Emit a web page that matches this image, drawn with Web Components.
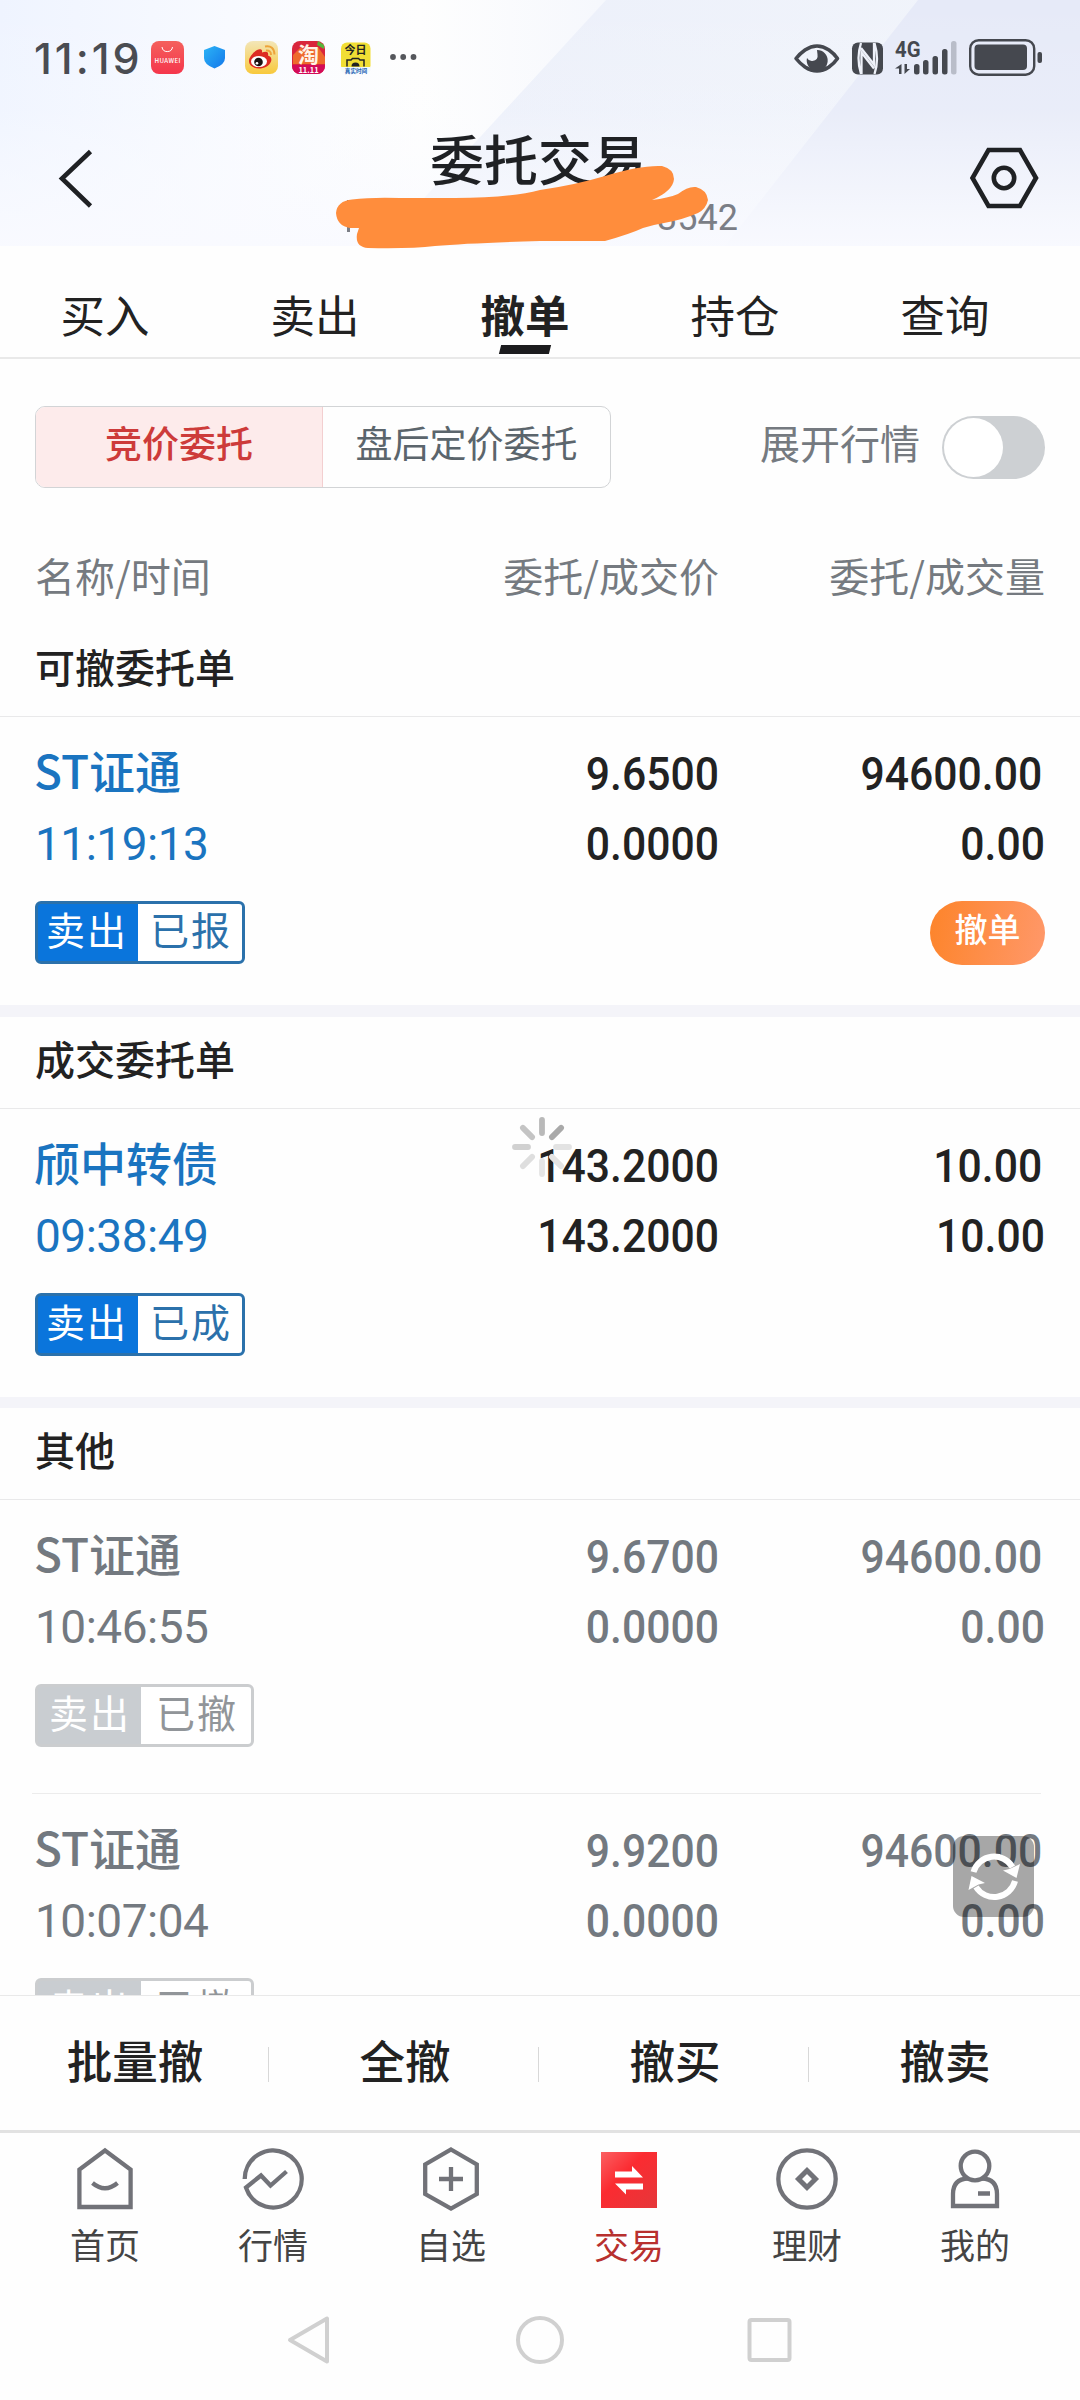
<!DOCTYPE html>
<html lang="zh-CN">
<head>
<meta charset="utf-8">
<title>委托交易</title>
<style>
  body {
    margin: 0;
    width: 1080px;
    height: 2400px;
    overflow: hidden;
    background: #fefefe;
    color: #222;
    font-family: "Noto Sans CJK SC", "Noto Sans", sans-serif;
  }
</style>
</head>
<body>
<trade-app></trade-app>

<script>
class StatusBar extends HTMLElement {
  constructor() {
    super();
    this.attachShadow({ mode: "open" });
    this.shadowRoot.innerHTML = `
      <style>
      :host {
        display: flex;
        height: 116px;
        align-items: center;
        justify-content: space-between;
        padding: 0 38px 0 34px;
        box-sizing: border-box;
      }
      .time {
        font: 500 43px/60px Inter, Roboto, sans-serif;
        letter-spacing: 3px;
        color: #4a4c52;
        width: 117px;
        white-space: nowrap;
      }
      .left, .right {
        display: flex;
        align-items: center;
      }
      svg {
        display: block;
        overflow: visible;
      }
      </style>
      <div class="left">
        <div class="time">11:19</div>
        <svg width="270" height="34" viewBox="151 42 270 34" font-family="Noto Sans CJK SC, sans-serif">
          <defs>
            <linearGradient id="hw" x2="0" y2="1"><stop stop-color="#f4605c"/><stop offset="1" stop-color="#f5364c"/></linearGradient>
            <linearGradient id="sh" x2="1" y2="1"><stop stop-color="#2bb4f6"/><stop offset="1" stop-color="#1477ea"/></linearGradient>
            <linearGradient id="wb" x2="0" y2="1"><stop stop-color="#f3e6b8"/><stop offset="1" stop-color="#f8c93c"/></linearGradient>
          </defs>
          <rect x="151" y="42" width="33" height="33" rx="8" fill="url(#hw)"/>
          <path d="M162 48a5.300 5.300 0 0 0 10.500 0" fill="none" stroke="#fff" stroke-width="1"/>
          <text x="167.500" y="63.500" font-size="6.200" font-weight="500" fill="#fff" text-anchor="middle" textLength="26">HUAWEI</text>
          <path d="M214.500 47l10.500 4v8q0 6.500-10.500 10.500q-10.500-4-10.500-10.500v-8z" fill="url(#sh)"/>
          <rect x="245" y="42" width="33" height="33" rx="8" fill="url(#wb)"/>
          <path d="M249 62c0-5 8-13 12-11.500c1.500.5 1 2.500 1 3c4-1.500 7-1 6 3c3 1 4 3 3 6c-1.500 4.500-7 7-12 7c-6 0-10-3.500-10-7.500z" fill="#dd2a22"/>
          <ellipse cx="259" cy="62.500" rx="8" ry="5.600" fill="#fff"/>
          <circle cx="258.500" cy="63" r="4.300" fill="#1a1212"/>
          <circle cx="257" cy="64.200" r="1.300" fill="#fff"/>
          <path d="M265 47.500q9-1.500 9.500 8M266 51.500q5-.5 5 4.500" fill="none" stroke="#eda33a" stroke-width="2"/>
          <rect x="292" y="42" width="33" height="33" rx="8" fill="#d9263c"/>
          <path d="M292 66h33v1a8 8 0 0 1-8 8h-17a8 8 0 0 1-8-8z" fill="#d40b58"/>
          <path d="M293 56l8-8l5 4l12-4l7 10v7h-32z" fill="#ee6a2c"/>
          <path d="M318 42l6 4v4l-7-4z" fill="#58b53a"/>
          <text x="308.500" y="62.500" font-size="21" font-weight="700" fill="#fff3e6" text-anchor="middle">淘</text>
          <text x="308.500" y="73.500" font-size="7.500" font-weight="700" fill="#fff" text-anchor="middle">11.11</text>
          <rect x="341" y="43.500" width="29.500" height="29" rx="6" fill="#f1de35"/>
          <path d="M341 68h29.500v3q-1 3-4 3h-21q-4 0-4.500-3z" fill="#f4fafc"/>
          <text x="355.500" y="55" font-size="11" font-weight="700" fill="#222" text-anchor="middle">今日</text>
          <path d="M347 67.500v-6.500h4l1.500-1.500h6l1.500 1.500h4v6.500" fill="none" stroke="#222" stroke-width="1.500"/>
          <path d="M351.500 67.500a4 4 0 0 1 8 0z" fill="#222"/>
          <text x="356" y="73.500" font-size="5.600" font-weight="700" fill="#2262b4" text-anchor="middle">真实时间</text>
          <g fill="#55575c"><circle cx="393" cy="58" r="2.900"/><circle cx="403.200" cy="58" r="2.900"/><circle cx="413.500" cy="58" r="2.900"/></g>
        </svg>
      </div>
      <div class="right">
        <svg width="250" height="40" viewBox="792 38 250 40" fill="#45484f">
          <path d="M796 58.500q4-5 9-8.500q12-8 24 0q5 3.500 8.500 8.500q-3.500 5-8.500 8.500q-12 8-24 0q-5-3.500-9-8.500z" fill="none" stroke="#45484f" stroke-width="3.600" stroke-linejoin="round"/>
          <path d="M817 50a10.500 10.500 0 1 1-10 8q2 3.500 5.500 3q6-1 5-6.500q-.3-3-.5-4.500z"/>
          <rect x="852" y="42.500" width="31" height="32" rx="6"/>
          <path d="M861 43q-5 15 0 31M874.500 74q5-15 0-31M861.500 74V52.500l12.500 16M874 43v21.500l-13-16.500" fill="none" stroke="#eef1f9" stroke-width="2.300"/>
          <text x="895" y="57" font-family="Roboto" font-size="22" font-weight="700" textLength="25.500" lengthAdjust="spacingAndGlyphs">4G</text>
          <path d="M901.500 64v10h-2.500v-5.500h-4zM904.500 64v10l5.500-5h-3v-5z"/>
          <rect x="914" y="64" width="5.500" height="10.500" rx="2.500"/>
          <rect x="923" y="60" width="5.500" height="14.500" rx="2.500"/>
          <rect x="932.500" y="56" width="5.500" height="18.500" rx="2.500"/>
          <rect x="942" y="49" width="5.500" height="25.500" rx="2.500"/>
          <rect x="951" y="41" width="5.500" height="33.500" rx="2.500" fill="#b9bdc9"/>
          <rect x="970.200" y="40.200" width="64" height="34.500" rx="8.500" fill="none" stroke="#45484f" stroke-width="2.400"/>
          <rect x="974.500" y="44.500" width="52.500" height="25.500" rx="4"/>
          <rect x="1037.500" y="52" width="4.500" height="11" rx="2"/>
        </svg>
      </div>
    `;
  }
}
customElements.define("status-bar", StatusBar);

class PageHeader extends HTMLElement {
  constructor() {
    super();
    this.attachShadow({ mode: "open" });
    this.shadowRoot.innerHTML = `
      <style>
      :host {
        display: block;
        height: 246px;
        position: relative;
        background: linear-gradient(90deg, #eff4ff 0, #f8faff 230px, #fefefe 420px, #f6f8fd 600px, #eef1fa 1080px);
      }
      .facets, .mark {
        position: absolute;
        left: 0;
        top: 0;
      }
      .top {
        position: relative;
      }
      .bar {
        display: flex;
        height: 130px;
        box-sizing: border-box;
        justify-content: space-between;
        padding: 0 38px 0 54px;
      }
      .bar svg {
        margin-top: 28px;
      }
      .title {
        display: flex;
        flex-direction: column;
        align-items: center;
        padding-left: 21px;
        padding-right: 9px;
        width: 400px;
      }
      h1 {
        margin: 0;
        font-size: 54px;
        font-weight: 500;
        line-height: 60px;
        height: 79px;
        margin-top: 12px;
        margin-bottom: -9px;
        color: #1f2124;
      }
      .account {
        font: 36px/40px Roboto, sans-serif;
        color: #7b7e86;
        align-self: flex-end;
        margin-right: 0;
      }
      </style>
      <svg class="facets" width="1080" height="246">
        <defs>
          <linearGradient id="fade" x2="0" y2="1"><stop stop-color="#fff" stop-opacity="0"/><stop offset=".45" stop-color="#fbfcff" stop-opacity=".15"/><stop offset="1" stop-color="#f9faff" stop-opacity=".95"/></linearGradient>
          <linearGradient id="glow" x2="1" y2="0"><stop stop-color="#ebeffa"/><stop offset="1" stop-color="#f2f5fb"/></linearGradient>
        </defs>
        <path d="M606 0H1080V246H380z" fill="url(#glow)"/>
        <path d="M918 0H1080V246H725z" fill="#e6eaf8"/>
        <rect width="1080" height="246" fill="url(#fade)"/>
      </svg>
      <div class="top">
        <slot></slot>
        <div class="bar">
          <svg width="44" height="68" viewBox="54 144 44 68"><path d="M90.500 151.500L62 178.500L90.500 206" fill="none" stroke="#1f2124" stroke-width="4.600"/></svg>
          <div class="title">
            <h1>委托交易</h1>
            <div class="account">3542</div>
          </div>
          <svg width="76" height="68" viewBox="966 144 76 68" fill="none" stroke="#1f2124" stroke-width="4.600">
            <path d="M988.500 150H1020L1036 178L1020 206H988.500L972.500 178z"/>
            <circle cx="1004" cy="178" r="10.200"/>
          </svg>
        </div>
      </div>
      <svg class="mark" width="1080" height="256">
        <path d="M348.500 200V232" stroke="#7b7e86" stroke-width="3"/>
        <path d="M336 213Q337 201 352 199.500Q372 197 400 198H455Q510 198 540 190Q575 185 605 176Q640 165 662 166Q674 169 674 179Q673 191 652 200Q668 198 678 194Q688 186 696 187Q707 190 708 200Q706 209 698 213Q682 220 664 223Q652 225 643 228Q630 234 605 241H540Q470 243 435 246Q410 249 368 248Q355 247 357 234L359 228H350Q337 226 336 213z" fill="#ff8d3c"/>
      </svg>
    `;
  }
}
customElements.define("page-header", PageHeader);

class TradeTabs extends HTMLElement {
  constructor() {
    super();
    this.attachShadow({ mode: "open" });
    this.shadowRoot.innerHTML = `
      <style>
      :host {
        display: flex;
        height: 113px;
        box-sizing: border-box;
        padding-top: 33px;
        border-bottom: 2px solid #e9e9e9;
      }
      ::slotted(*) {
        width: 210px;
        text-align: center;
        font-size: 44.500px;
        line-height: 70px;
      }
      ::slotted(.active) {
        font-weight: 700;
      }
      ::slotted(.active)::after {
        content: "";
        display: block;
        width: 50px;
        height: 9px;
        margin: -4px auto 0;
        background: #1c1c1e;
        transform: skewX(-14deg);
      }
      </style>
      <slot></slot>
    `;
  }
}
customElements.define("trade-tabs", TradeTabs);

class FilterBar extends HTMLElement {
  constructor() {
    super();
    this.attachShadow({ mode: "open" });
    this.shadowRoot.innerHTML = `
      <style>
      :host {
        display: flex;
        align-items: center;
        height: 82px;
        padding: 47px 35px 0;
      }
      .segment {
        display: flex;
        box-sizing: border-box;
        width: 576px;
        height: 82px;
        border: 1px solid #d2d4d6;
        border-radius: 10px;
        overflow: hidden;
        font-size: 37px;
        line-height: 71px;
        text-align: center;
      }
      .on {
        width: 286px;
        background: #fdebeb;
        border-right: 1px solid #f3cfd0;
        color: #cd3b3a;
        font-weight: 500;
      }
      .off {
        flex: 1;
        color: #5b656c;
      }
      .label {
        margin-left: auto;
        font-size: 40px;
        line-height: 60px;
        padding-bottom: 10px;
        color: #757a80;
      }
      .switch {
        width: 103px;
        height: 63px;
        border-radius: 32px;
        background: #cdd0d3;
        margin-left: 22px;
        box-sizing: border-box;
        padding: 2px;
      }
      .knob {
        width: 59px;
        height: 59px;
        border-radius: 50%;
        background: #fff;
      }
      </style>
      <div class="segment">
        <div class="on">竞价委托</div>
        <div class="off">盘后定价委托</div>
      </div>
      <div class="label">展开行情</div>
      <div class="switch"><div class="knob"></div></div>
    `;
  }
}
customElements.define("filter-bar", FilterBar);

class OrderSection extends HTMLElement {
  constructor() {
    super();
    this.attachShadow({ mode: "open" });
    this.shadowRoot.innerHTML = `
      <style>
      :host {
        display: block;
      }
      :host(:not(:first-of-type)) {
        border-top: 12px solid #f4f4f9;
      }
      :host(:last-of-type) {
        border-top-width: 11px;
      }
      .title {
        height: 92px;
        box-sizing: border-box;
        padding-left: 35px;
        border-bottom: 1px solid #e9e9ea;
        font-size: 40px;
        font-weight: 500;
        line-height: 83px;
      }
      </style>
      <div class="title">${this.getAttribute("heading")}</div>
      <slot></slot>
    `;
  }
}

class OrderRow extends HTMLElement {
  constructor() {
    super();
    this.attachShadow({ mode: "open" });
    const get = (name) => this.getAttribute(name) || "";
    this.shadowRoot.innerHTML = `
      <style>
      :host {
        display: grid;
        grid-template-columns: 380px 304px 1fr;
        height: 288px;
        box-sizing: border-box;
        padding: 22px 35px 0;
        --main: #1a74c0;
        --fill: #0a75dc;
        --line: #2b71ab;
        --state: #2b71ab;
        color: #222;
      }
      :host([done]) {
        height: 294px;
        --main: #737980;
        --fill: #c9cdd1;
        --line: #cbcdcf;
        --state: #919599;
        color: #737980;
      }
      :host([done]:not(:last-of-type)) {
        background: linear-gradient(#ececec, #ececec) no-repeat 32px 293px / 1009px 1px;
      }
      .name {
        font-size: 46px;
        font-weight: 500;
        line-height: 60px;
        padding-bottom: 10px;
        margin-left: -1px;
        color: var(--main);
      }
      .time {
        font: 46px/70px Roboto, sans-serif;
        letter-spacing: -.5px;
        color: var(--main);
      }
      .tag {
        display: inline-flex;
        height: 63px;
        box-sizing: border-box;
        margin-top: 22px;
        border: 3px solid var(--line);
        border-radius: 6px;
        background: var(--fill);
        font-size: 39px;
        letter-spacing: 2px;
        line-height: 49px;
      }
      .side {
        color: #fff;
        width: 100px;
        text-indent: 8px;
      }
      .state {
        background: #fff;
        color: var(--state);
        width: 104px;
        text-indent: 12px;
        border-radius: 0 3px 3px 0;
      }
      :host([done]) .side {
        width: 103px;
        text-indent: 11px;
      }
      :host([done]) .state {
        width: 110px;
        text-indent: 15px;
      }
      .num {
        font: 500 46px/70px Roboto, sans-serif;
        text-align: right;
      }
      .num div {
        transform: scaleX(.928);
        transform-origin: right;
      }
      .amount div:first-child {
        padding-right: 3px;
      }
      .pill {
        display: flex;
        margin-top: 22px;
        margin-left: auto;
        width: 115px;
        height: 64px;
        border-radius: 32px;
        background: linear-gradient(100deg, #fd842a, #ff986a);
        color: #fff;
        font: 500 33px/55px "Noto Sans CJK SC", sans-serif;
        justify-content: center;
      }
      </style>
      <div>
        <div class="name">${get("name")}</div>
        <div class="time">${get("time")}</div>
        <div class="tag"><span class="side">卖出</span><span class="state">${get("state")}</span></div>
      </div>
      <div class="num">
        <div>${get("price")}</div>
        <div>${get("deal-price")}</div>
      </div>
      <div class="num amount">
        <div>${get("amount")}</div>
        <div>${get("deal-amount")}</div>
        ${this.hasAttribute("cancelable") ? `<span class="pill">撤单</span>` : ""}
      </div>
    `;
  }
}

class LoadingSpinner extends HTMLElement {
  constructor() {
    super();
    this.attachShadow({ mode: "open" });
    const shades = ["#b9b9b9", "#a9a9a9", "#e3e3e3", "#e4e4e4", "#e5e5e5", "#dedede", "#d1d1d1", "#c4c4c4"];
    const spokes = shades.map((c, i) =>
      `<path d="M0-27V-14" stroke="${c}" transform="rotate(${i * 45})"/>`).join("");
    this.shadowRoot.innerHTML = `
      <style>
      :host {
        position: absolute;
        left: 511px;
        top: 1116px;
      }
      svg {
        display: block;
      }
      </style>
      <svg width="62" height="62" viewBox="-31 -31 62 62" stroke-width="5.800" stroke-linecap="round">${spokes}</svg>
    `;
  }
}
customElements.define("loading-spinner", LoadingSpinner);

class RefreshButton extends HTMLElement {
  constructor() {
    super();
    this.attachShadow({ mode: "open" });
    this.shadowRoot.innerHTML = `
      <style>
      :host {
        position: absolute;
        left: 953px;
        top: 1836px;
        width: 81px;
        height: 81px;
        border-radius: 11px;
        background: rgba(0, 0, 0, .34);
      }
      svg {
        display: block;
      }
      </style>
      <svg width="81" height="81" viewBox="0 0 81 81" fill="#fff">
        <path d="M20.500 36A21.500 21.500 0 0 1 59.500 31" fill="none" stroke="#fff" stroke-width="6"/>
        <path d="M67 28L63.500 42L50 34.500L56.500 33z"/>
        <path d="M62 45A21.500 21.500 0 0 1 23 51" fill="none" stroke="#fff" stroke-width="6"/>
        <path d="M15.500 54L18.500 40L32 47L25.500 48.500z"/>
      </svg>
    `;
  }
}
customElements.define("refresh-button", RefreshButton);

class ActionBar extends HTMLElement {
  constructor() {
    super();
    this.attachShadow({ mode: "open" });
    this.shadowRoot.innerHTML = `
      <style>
      :host {
        display: grid;
        grid-template-columns: repeat(4, 1fr);
        height: 138px;
        box-sizing: border-box;
        border-top: 1px solid #e9e9e9;
        border-bottom: 3px solid #e2e2e2;
        background: #fefefe;
      }
      ::slotted(*) {
        text-align: center;
        font-size: 45.500px;
        font-weight: 500;
        line-height: 126px;
      }
      ::slotted(:not(:last-child)) {
        background: linear-gradient(#d8d8d8, #d8d8d8) no-repeat 268px 51px / 1px 35px;
      }
      </style>
      <slot></slot>
    `;
  }
}
customElements.define("action-bar", ActionBar);

class TabItem extends HTMLElement {
  constructor() {
    super();
    this.attachShadow({ mode: "open" });
    this.shadowRoot.innerHTML = `
      <style>
      :host {
        display: flex;
        flex-direction: column;
        align-items: center;
        color: #444;
      }
      :host([active]) {
        color: #b8302e;
      }
      svg {
        display: block;
        margin-top: 12px;
      }
      span {
        font-size: 35px;
        line-height: 50px;
        margin-top: 6px;
      }
      </style>
      <svg width="68" height="68" viewBox="-34 -34 68 68" fill="none" stroke="#717278" stroke-width="4.300">
        ${TabItem.icons[this.getAttribute("icon")]}
      </svg>
      <span><slot></slot></span>
    `;
  }
}
TabItem.icons = {
  home: `<path d="M0-28.500L25.600-9.500V28H-25.600V-9.500zM-12.500 4Q0 14.500 12.500 4"/>`,
  chart: `<path d="M-28.300 0A28.500 28.500 0 1 1-27 8.500L-12-3.500L-2.500 6.500L13.500-7.500" stroke-linejoin="miter"/>`,
  pick: `<path d="M0-29.500L25.800-14.500V15L0 29.500L-25.800 15V-14.500zM-12 0H12M0-12V12"/>`,
  trade: `
    <defs><linearGradient id="r" x2="1" y2="1"><stop stop-color="#fb6062"/><stop offset=".4" stop-color="#fb2b31"/><stop offset="1" stop-color="#e5373a"/></linearGradient></defs>
    <rect x="-28" y="-27" width="56" height="56" fill="url(#r)" stroke="none"/>
    <path d="M-14-7.500H3V-13L14-1.500H-14zM14 4.500H-14L-3 15.500V10.500H14z" fill="#fff" stroke="none"/>`,
  money: `<circle r="28.700"/><path d="M0-8.500L8.500 0L0 8.500L-8.500 0z" stroke-width="5"/>`,
  me: `<circle cy="-13" r="14.300"/><path d="M-7-.5Q-22 0-22 15V27H22V15Q22 0 7-.5M3 14.500H15"/>`
};

class TabBar extends HTMLElement {
  constructor() {
    super();
    this.attachShadow({ mode: "open" });
    this.shadowRoot.innerHTML = `
      <style>
      :host {
        display: grid;
        grid-template-columns: 158px repeat(4, 1fr) 158px;
        height: 148px;
        padding: 0 26px;
      }
      </style>
      <slot></slot>
    `;
  }
}
customElements.define("tab-bar", TabBar);

class SystemNav extends HTMLElement {
  constructor() {
    super();
    this.attachShadow({ mode: "open" });
    this.shadowRoot.innerHTML = `
      <style>
      :host {
        display: flex;
        justify-content: space-between;
        align-items: center;
        height: 118px;
        padding: 0 284px;
      }
      svg {
        display: block;
      }
      </style>
      <svg width="52" height="52" fill="none" stroke="#d0d0d0" stroke-width="4" stroke-linejoin="round"><path d="M43 4.500V47.500L6 26z"/></svg>
      <svg width="52" height="52" fill="none" stroke="#d0d0d0" stroke-width="4"><circle cx="26" cy="26" r="22"/></svg>
      <svg width="52" height="52" fill="none" stroke="#d0d0d0" stroke-width="4"><rect x="5.500" y="6" width="40" height="40" rx="2"/></svg>
    `;
  }
}
customElements.define("system-nav", SystemNav);

class TradeApp extends HTMLElement {
  constructor() {
    super();
    this.attachShadow({ mode: "open" });
    this.shadowRoot.innerHTML = `
      <style>
      :host {
        display: block;
        height: 2400px;
        position: relative;
      }
      .columns {
        display: grid;
        grid-template-columns: 380px 304px 1fr;
        height: 137px;
        box-sizing: border-box;
        padding: 57px 35px 0;
        font-size: 40px;
        line-height: 60px;
        color: #757a80;
      }
      .columns span + span {
        text-align: right;
      }
      .list {
        height: 1370px;
        overflow: hidden;
      }
      </style>
      <page-header><status-bar></status-bar></page-header>
      <trade-tabs>
        <span>买入</span><span>卖出</span><span class="active">撤单</span><span>持仓</span><span>查询</span>
      </trade-tabs>
      <filter-bar></filter-bar>
      <div class="columns"><span>名称/时间</span><span>委托/成交价</span><span>委托/成交量</span></div>
      <div class="list">
        <order-section heading="可撤委托单">
          <order-row name="ST证通" time="11:19:13" state="已报" price="9.6500" deal-price="0.0000" amount="94600.00" deal-amount="0.00" cancelable></order-row>
        </order-section>
        <order-section heading="成交委托单">
          <order-row name="颀中转债" time="09:38:49" state="已成" price="143.2000" deal-price="143.2000" amount="10.00" deal-amount="10.00"></order-row>
        </order-section>
        <order-section heading="其他">
          <order-row name="ST证通" time="10:46:55" state="已撤" price="9.6700" deal-price="0.0000" amount="94600.00" deal-amount="0.00" done></order-row>
          <order-row name="ST证通" time="10:07:04" state="已撤" price="9.9200" deal-price="0.0000" amount="94600.00" deal-amount="0.00" done></order-row>
        </order-section>
      </div>
      <action-bar>
        <span>批量撤</span><span>全撤</span><span>撤买</span><span>撤卖</span>
      </action-bar>
      <tab-bar>
        <tab-item icon="home">首页</tab-item>
        <tab-item icon="chart">行情</tab-item>
        <tab-item icon="pick">自选</tab-item>
        <tab-item icon="trade" active>交易</tab-item>
        <tab-item icon="money">理财</tab-item>
        <tab-item icon="me">我的</tab-item>
      </tab-bar>
      <system-nav></system-nav>
      <loading-spinner></loading-spinner>
      <refresh-button></refresh-button>
    `;
  }
}
customElements.define("trade-app", TradeApp);

// these read their attributes, so they are upgraded once the app's markup is in place
customElements.define("order-section", OrderSection);
customElements.define("order-row", OrderRow);
customElements.define("tab-item", TabItem);
</script>
</body>
</html>
